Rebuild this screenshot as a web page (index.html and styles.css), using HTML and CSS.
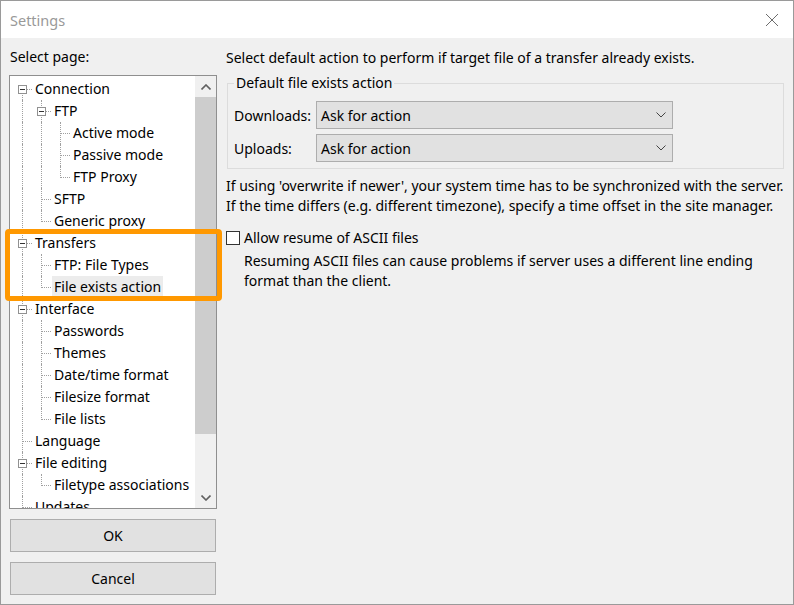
FILE: index.html
```html
<!DOCTYPE html>
<html>
<head>
<meta charset="utf-8">
<title>Settings</title>
<link rel="stylesheet" href="styles.css">
</head>
<body>
<div class="window">
  <div class="titlebar">
    <span class="title">Settings</span>
    <svg class="close" width="14" height="14" viewBox="0 0 14 14"><path d="M1 1L13 13M13 1L1 13" stroke="#6d6d6d" stroke-width="1" fill="none"/></svg>
  </div>
  <div class="content">
    <div class="left">
      <div class="caption">Select page:</div>
      <div class="tree">
        <div class="tree-items">
          <div class="row"><span class="g f"><span class="btn"></span></span><span class="label">Connection</span></div>
          <div class="row"><span class="g v"></span><span class="g t"><span class="btn"></span></span><span class="label">FTP</span></div>
          <div class="row"><span class="g v"></span><span class="g v"></span><span class="g t"></span><span class="label">Active mode</span></div>
          <div class="row"><span class="g v"></span><span class="g v"></span><span class="g t"></span><span class="label">Passive mode</span></div>
          <div class="row"><span class="g v"></span><span class="g v"></span><span class="g l"></span><span class="label">FTP Proxy</span></div>
          <div class="row"><span class="g v"></span><span class="g t"></span><span class="label">SFTP</span></div>
          <div class="row"><span class="g v"></span><span class="g l"></span><span class="label">Generic proxy</span></div>
          <div class="row"><span class="g t"><span class="btn"></span></span><span class="label">Transfers</span></div>
          <div class="row"><span class="g v"></span><span class="g t"></span><span class="label">FTP: File Types</span></div>
          <div class="row"><span class="g v"></span><span class="g l"></span><span class="label selected">File exists action</span></div>
          <div class="row"><span class="g t"><span class="btn"></span></span><span class="label">Interface</span></div>
          <div class="row"><span class="g v"></span><span class="g t"></span><span class="label">Passwords</span></div>
          <div class="row"><span class="g v"></span><span class="g t"></span><span class="label">Themes</span></div>
          <div class="row"><span class="g v"></span><span class="g t"></span><span class="label">Date/time format</span></div>
          <div class="row"><span class="g v"></span><span class="g t"></span><span class="label">Filesize format</span></div>
          <div class="row"><span class="g v"></span><span class="g l"></span><span class="label">File lists</span></div>
          <div class="row"><span class="g t"></span><span class="label">Language</span></div>
          <div class="row"><span class="g t"><span class="btn"></span></span><span class="label">File editing</span></div>
          <div class="row"><span class="g v"></span><span class="g l"></span><span class="label">Filetype associations</span></div>
          <div class="row"><span class="g t"></span><span class="label">Updates</span></div>
        </div>
        <div class="scrollbar">
          <div class="sb-arrow"><svg width="10" height="6" viewBox="0 0 10 6"><path d="M0.5 5.5L5 1L9.5 5.5" stroke="#606060" stroke-width="1.6" fill="none"/></svg></div>
          <div class="sb-track"><div class="sb-thumb"></div></div>
          <div class="sb-arrow"><svg width="10" height="6" viewBox="0 0 10 6"><path d="M0.5 0.5L5 5L9.5 0.5" stroke="#606060" stroke-width="1.6" fill="none"/></svg></div>
        </div>
      </div>
      <button class="btn-push">OK</button>
      <button class="btn-push">Cancel</button>
      <div class="highlight"></div>
    </div>
    <div class="right">
      <div class="intro">Select default action to perform if target file of a transfer already exists.</div>
      <fieldset class="group">
        <legend>Default file exists action</legend>
        <div class="form-grid">
          <span class="flabel">Downloads:</span>
          <div class="combo"><span>Ask for action</span><svg width="10" height="6" viewBox="0 0 10 6"><path d="M0.5 0.5L5 5L9.5 0.5" stroke="#444" stroke-width="1" fill="none"/></svg></div>
          <span class="flabel">Uploads:</span>
          <div class="combo"><span>Ask for action</span><svg width="10" height="6" viewBox="0 0 10 6"><path d="M0.5 0.5L5 5L9.5 0.5" stroke="#444" stroke-width="1" fill="none"/></svg></div>
        </div>
      </fieldset>
      <p class="note">If using 'overwrite if newer', your system time has to be synchronized with the server.<br>If the time differs (e.g. different timezone), specify a time offset in the site manager.</p>
      <label class="check"><span class="box"></span><span>Allow resume of ASCII files</span></label>
      <p class="desc">Resuming ASCII files can cause problems if server uses a different line ending<br>format than the client.</p>
    </div>
  </div>
</div>
</body>
</html>
```

FILE: styles.css
```css
* { box-sizing: border-box; }
html, body { margin: 0; padding: 0; }
body {
  font-family: "Noto Sans", sans-serif;
  font-size: 14px;
  color: #000;
  background: #f0f0f0;
}
.window {
  width: 794px;
  height: 605px;
  border: 1px solid #9a9a9a;
  background: #f0f0f0;
  display: flex;
  flex-direction: column;
}
.titlebar {
  height: 37px;
  background: #fff;
  display: flex;
  align-items: center;
  justify-content: space-between;
  padding: 0 14px 0 9px;
}
.title {
  color: #999;
  font-size: 14.5px;
  line-height: 20px;
}
.close { display: block; }
.content {
  flex: 1;
  display: flex;
  padding: 9px 0 0 8px;
}
.left {
  width: 208px;
  display: flex;
  flex-direction: column;
  position: relative;
}
.caption {
  line-height: 20px;
  padding-left: 1px;
  margin-bottom: 8px;
}
.tree {
  height: 434px;
  border: 1px solid #8f8f8f;
  background: #fff;
  display: flex;
}
.tree-items {
  flex: 1;
  overflow: hidden;
  padding: 2px 0 0 3px;
}
.row {
  height: 22px;
  display: flex;
  align-items: center;
  white-space: nowrap;
}
.g {
  width: 19px;
  height: 22px;
  flex: none;
  position: relative;
}
.g::before, .g::after {
  content: "";
  position: absolute;
}
.g.v::before, .g.t::before {
  left: 9px; top: 0; height: 22px;
  border-left: 1px dotted #a0a0a0;
}
.g.l::before {
  left: 9px; top: 0; height: 12px;
  border-left: 1px dotted #a0a0a0;
}
.g.f::before {
  left: 9px; top: 11px; height: 11px;
  border-left: 1px dotted #a0a0a0;
}
.g.t::after, .g.l::after, .g.f::after {
  left: 10px; top: 11px; width: 9px;
  border-top: 1px dotted #a0a0a0;
}
.btn {
  position: absolute;
  left: 5px; top: 7px;
  width: 9px; height: 9px;
  border: 1px solid #919191;
  background: #fff;
  z-index: 1;
}
.btn::after {
  content: "";
  position: absolute;
  left: 1px; top: 3px;
  width: 5px; height: 1px;
  background: #333;
}
.label {
  margin-left: 1px;
  padding: 0 2px;
  line-height: 22px;
}
.label.selected { background: #ececec; }
.scrollbar {
  width: 21px;
  flex: none;
  background: #f0f0f0;
  display: flex;
  flex-direction: column;
}
.sb-arrow {
  height: 21px;
  display: flex;
  align-items: center;
  justify-content: center;
}
.sb-track { flex: 1; }
.sb-thumb {
  height: 337px;
  background: #cdcdcd;
}
.btn-push {
  font: inherit;
  color: #000;
  margin: 10px 0 0 1px;
  width: 206px;
  height: 33px;
  background: #e1e1e1;
  border: 1px solid #adadad;
  padding: 0;
}
.highlight {
  position: absolute;
  left: -4px; top: 182px;
  width: 217px; height: 72px;
  border: 5px solid #ff9800;
  border-radius: 4px;
}
.right {
  flex: 1;
  padding: 1px 9px 0 9px;
}
.intro { line-height: 20px; }
.group {
  margin: 5px 0 0 1px;
  border: 1px solid #dcdcdc;
  padding: 8px 6px 6px 6px;
  min-width: 0;
}
.group legend {
  padding: 0 2px;
  margin-left: 0;
  line-height: 20px;
}
.form-grid {
  display: grid;
  grid-template-columns: 82px 357px;
  row-gap: 5px;
  align-items: center;
}
.combo {
  height: 28px;
  background: #e1e1e1;
  border: 1px solid #adadad;
  display: flex;
  align-items: center;
  justify-content: space-between;
  padding: 0 6px 0 4px;
}
.note {
  margin: 7px 0 0 0;
  line-height: 20px;
}
.check {
  display: flex;
  align-items: center;
  margin-top: 12px;
  line-height: 20px;
}
.box {
  width: 14px; height: 14px;
  border: 1px solid #333;
  background: #fff;
  margin-right: 4px;
}
.desc {
  margin: 3px 0 0 18px;
  line-height: 20px;
}
```
